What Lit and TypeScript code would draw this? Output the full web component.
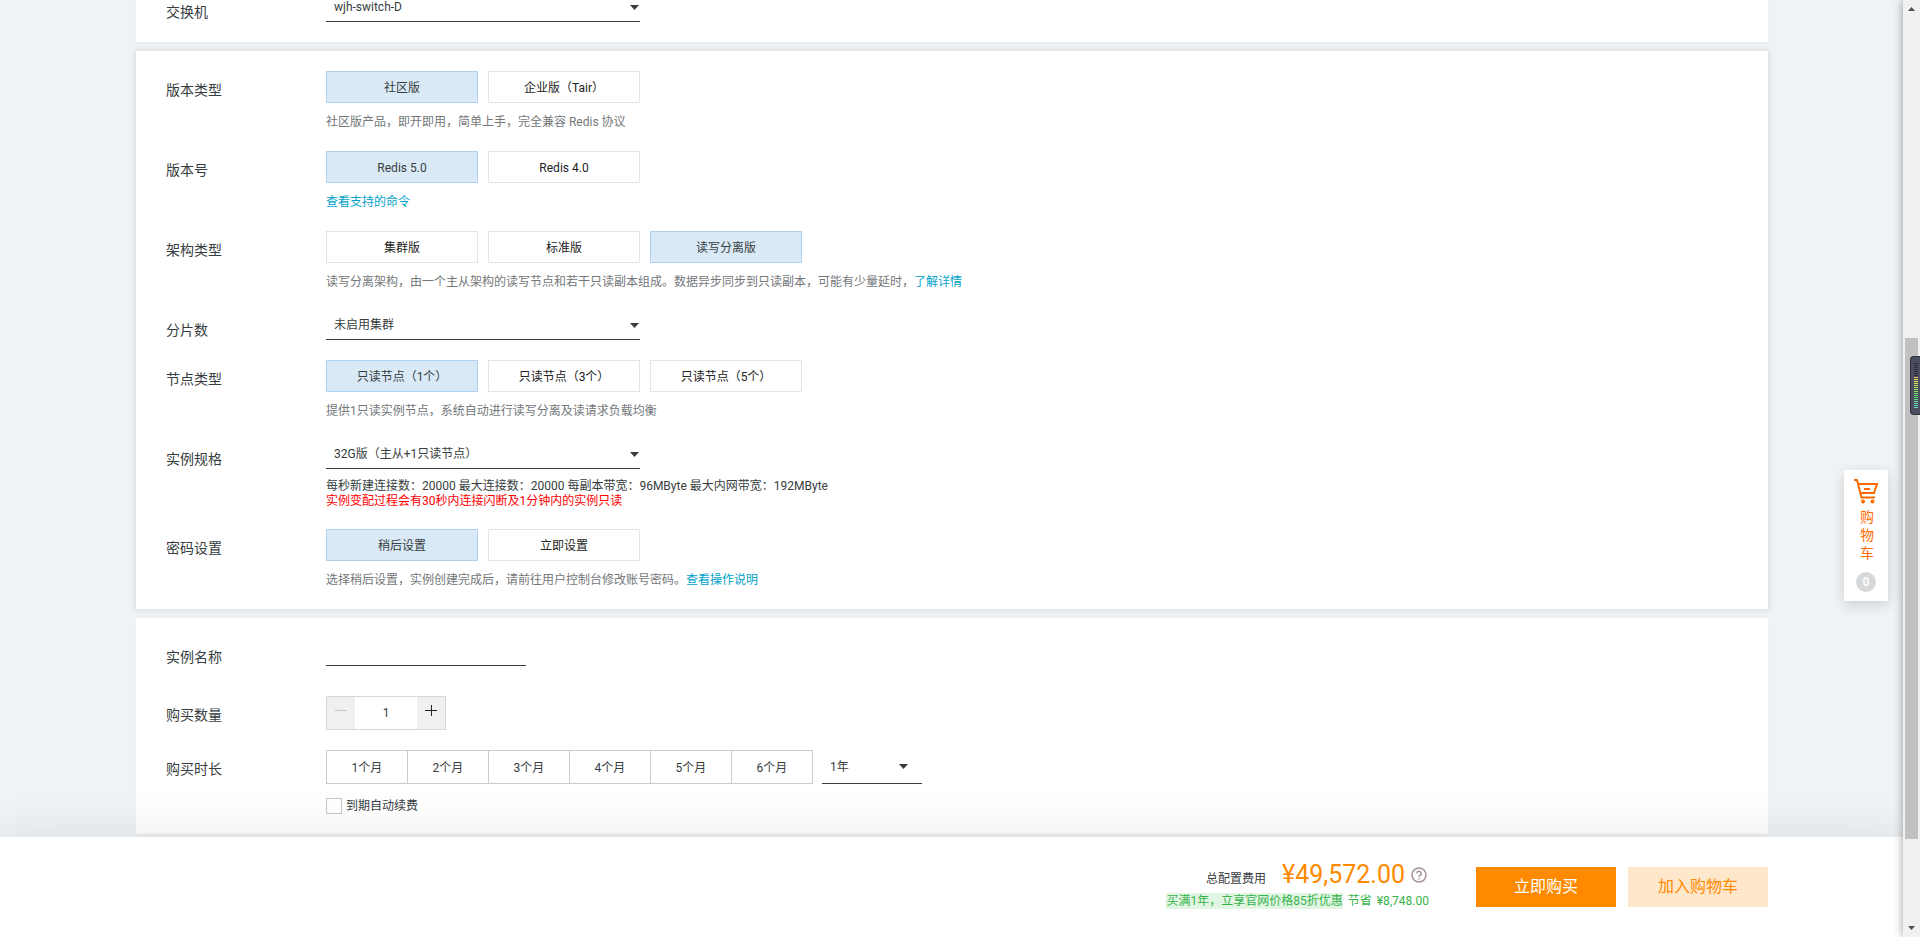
import { LitElement, html, css, svg, nothing } from "lit";
import { customElement, property, state } from "lit/decorators.js";
import { classMap } from "lit/directives/class-map.js";

const base = css`
  :host, * { box-sizing: border-box; }
  button, input, select { font: inherit; color: inherit; margin: 0; border-radius: 0; }
  button { padding: 0; cursor: pointer; }
`;

@customElement("drop-down")
class DropDown extends LitElement {
  static styles = [base, css`
    :host { display: grid; width: 314px; height: 29px; border-bottom: 1px solid #373d41; }
    :host([compact]) { width: 100px; height: 34px; }
    select {
      grid-area: 1 / 1; width: 100%; appearance: none; border: 0; outline: 0;
      background: transparent; padding: 0 24px 0 8px; color: #373d41;
    }
    svg { grid-area: 1 / 1; place-self: center end; margin-right: 1px; width: 9px; height: 5px; pointer-events: none; }
    :host([compact]) svg { margin-right: 14px; }
  `];
  @property() label = "";
  @property() value = "";
  render() {
    return html`
      <select aria-label=${this.label}><option>${this.value}</option></select>
      <svg viewBox="0 0 9 5"><path d="M0 0h9L4.500 5z" fill="#373d41" /></svg>`;
  }
}

@customElement("option-group")
class OptionGroup extends LitElement {
  static styles = [base, css`
    :host { display: flex; gap: 10px; }
    button { width: 152px; height: 32px; padding-top: 2px; border: 1px solid #e3e4e6; background: #fff; color: #222; }
    .on { background: #d9eaf6; border-color: #b0d2ee; color: #373d41; }
  `];
  @property({ attribute: false }) options: string[] = [];
  @property({ type: Number }) selected = 0;
  render() {
    return this.options.map((text, i) => html`
      <button type="button" aria-pressed=${i === this.selected} class=${classMap({ on: i === this.selected })}
        @click=${() => (this.selected = i)}>${text}</button>`);
  }
}

@customElement("form-row")
class FormRow extends LitElement {
  static styles = css`
    :host { display: grid; grid-template-columns: 160px 1fr; }
    .label { padding-top: 10px; font-size: 14px; line-height: 18px; }
  `;
  @property() label = "";
  render() {
    return html`<div class="label">${this.label}</div><div><slot></slot></div>`;
  }
}

@customElement("cart-tab")
class CartTab extends LitElement {
  static styles = [base, css`
    :host { display: block; }
    a {
      display: flex; flex-direction: column; align-items: center; width: 44px; height: 131px;
      padding-top: 8px; background: #fff; color: #ff6a00; text-decoration: none;
      box-shadow: 0 4px 12px rgba(0, 0, 0, .15);
    }
    svg { width: 26px; height: 26px; }
    .name { width: 14px; margin: 4px 0 0 2px; font-size: 14px; line-height: 18px; word-break: break-all; }
    .count {
      margin-top: 10px; width: 20px; height: 20px; border-radius: 50%; background: #d7d8d9;
      color: #fff; font-size: 12px; font-weight: 700; line-height: 20px; text-align: center;
    }
  `];
  render() {
    return html`<a href="#cart">
      <svg viewBox="0 0 26 26" fill="none" stroke="#ff6a00" stroke-width="2">
        <path d="M1 2h3l4.500 17.500H22M5 6h19l-3 9H8M11 11h6" />
        <circle cx="10" cy="23.500" r="2" fill="#ff6a00" stroke="none" />
        <circle cx="19.500" cy="23.500" r="2" fill="#ff6a00" stroke="none" />
      </svg>
      <span class="name">购物车</span>
      <span class="count">0</span>
    </a>`;
  }
}

@customElement("scroll-rail")
class ScrollRail extends LitElement {
  static styles = css`
    :host { display: flex; flex-direction: column; align-items: center; background: #f1f1f1; }
    svg { width: 17px; height: 17px; flex: none; }
    .before { flex: 321 0 0; }
    .thumb { flex: 501 0 0; width: 13px; background: #c1c1c1; }
    .after { flex: 81 0 0; }
  `;
  render() {
    return html`
      <svg viewBox="0 0 17 17"><path d="M5 11h7L8.500 7z" fill="#505050" /></svg>
      <div class="before"></div><div class="thumb"></div><div class="after"></div>
      <svg viewBox="0 0 17 17"><path d="M5 6h7L8.500 10z" fill="#505050" /></svg>`;
  }
}

@customElement("level-meter")
class LevelMeter extends LitElement {
  static styles = css`
    :host {
      display: block; width: 10px; height: 59px; box-sizing: border-box; overflow: hidden;
      background: #4a4e5e; border: 1px solid #2c2f3c; border-right: 0; border-radius: 4px 0 0 4px;
    }
    svg { display: block; width: 9px; height: 57px; }
  `;
  private color(i: number) {
    if (i < 7) return "#2b2e3a";
    const t = (i - 7) / 15;
    return `hsl(${Math.round(42 + t * 128)} ${Math.round(80 - t * 20)}% 63%)`;
  }
  render() {
    return html`<svg viewBox="0 0 9 57">
      ${Array.from({ length: 23 }, (_, i) => svg`<rect x="3" y=${6 + i * 2} width="4" height="1" fill=${this.color(i)} />`)}
    </svg>`;
  }
}

@customElement("app-root")
class AppRoot extends LitElement {
  static styles = [base, css`
    :host {
      display: grid; grid-template-columns: minmax(0, 1fr) 17px; height: 100vh; overflow: hidden; position: relative;
      font: 12px/18px Roboto, "Noto Sans CJK SC", sans-serif; color: #373d41; background: #f0f3f5;
    }
    .page { position: relative; display: flex; flex-direction: column; overflow: hidden; }
    .scroll { flex: 1; min-height: 0; overflow: hidden; padding: 0 135px 0 136px; }
    .cards { display: flex; flex-direction: column; gap: 9px; margin-top: -27px; }
    .card {
      display: flex; flex-direction: column; gap: 20px; padding: 20px 30px;
      background: #fff; box-shadow: 0 1px 2px rgba(0, 0, 0, .05);
    }
    .active { box-shadow: 0 0 6px 1px rgba(0, 0, 0, .1); }
    p { margin: 10px 0 0; }
    .hint { color: #73777a; }
    .tight { line-height: 15px; }
    .warn { color: #f00; }
    a { color: #00a2ca; text-decoration: none; }
    .name { display: block; width: 200px; height: 28px; margin-bottom: 10px; border: 0; border-bottom: 1px solid #373d41; background: transparent; outline: 0; }
    .stepper { display: flex; width: 120px; height: 34px; border: 1px solid #d7d8d9; }
    .stepper button { display: grid; place-items: center; width: 28px; border: 0; background: #f0f0f0; padding-bottom: 6px; color: #222; }
    .stepper button:disabled { color: #c6c8ca; }
    .stepper svg { width: 12px; height: 12px; }
    .stepper input { flex: 1; min-width: 0; border: 0; outline: 0; text-align: center; background: #fff; }
    .duration { display: flex; gap: 9px; }
    .months { display: flex; border: 1px solid #ccc; }
    .months button { width: 81px; height: 32px; padding-top: 2px; border: 0; border-right: 1px solid #ccc; background: transparent; }
    .months button:last-child { width: 80px; border-right: 0; }
    .months .on { background: #d9eaf6; }
    .renew { display: flex; align-items: center; gap: 4px; height: 16px; margin-top: 14px; }
    .renew input { appearance: none; width: 16px; height: 16px; border: 1px solid #c3c5d0; background: #fff; }
    .renew input:checked { background: #00a2ca; }
    .bar {
      position: relative; display: flex; justify-content: flex-end; align-items: flex-start; gap: 12px;
      height: 100px; padding: 22px 135px 0 0; background: #fff; box-shadow: 0 0 50px rgba(0, 0, 0, .1);
    }
    .cost { display: flex; flex-direction: column; align-items: flex-end; margin-right: 35px; }
    .total { display: flex; align-items: center; height: 32px; padding-right: 2px; }
    .total span { padding: 8px 16px 0 0; }
    .total strong { color: #ff8a00; font-size: 25px; font-weight: 400; line-height: 32px; padding-right: 6px; }
    .total svg { width: 16px; height: 16px; }
    .saving { display: flex; gap: 5px; color: #35b34a; line-height: 16px; margin-top: 2px; }
    mark { background: #e1f5e3; color: inherit; }
    .buy { width: 140px; height: 40px; margin-top: 8px; border: 0; background: #ff8a00; color: #fff; font-size: 16px; }
    .add { background: #ffe7cc; color: #ff8a00; }
    .edge { position: absolute; inset: 0 -10px 0 auto; width: 10px; box-shadow: 0 0 10px rgba(0, 0, 0, .4); }
    cart-tab { position: absolute; top: 470px; right: 15px; }
    level-meter { position: absolute; top: 356px; right: 0; }
  `];

  @state() private month = -1;
  @state() private count = 1;

  render() {
    const months = [1, 2, 3, 4, 5, 6];
    return html`
      <div class="page">
        <main class="scroll">
          <div class="cards">
            <section class="card">
              <form-row label="交换机"><drop-down label="交换机" value="wjh-switch-D"></drop-down></form-row>
            </section>
            <section class="card active">
              <form-row label="版本类型">
                <option-group .options=${["社区版", "企业版（Tair）"]}></option-group>
                <p class="hint">社区版产品，即开即用，简单上手，完全兼容 Redis 协议</p>
              </form-row>
              <form-row label="版本号">
                <option-group .options=${["Redis 5.0", "Redis 4.0"]}></option-group>
                <p><a href="#commands">查看支持的命令</a></p>
              </form-row>
              <form-row label="架构类型">
                <option-group .options=${["集群版", "标准版", "读写分离版"]} selected="2"></option-group>
                <p class="hint">读写分离架构，由一个主从架构的读写节点和若干只读副本组成。数据异步同步到只读副本，可能有少量延时，<a href="#details">了解详情</a></p>
              </form-row>
              <form-row label="分片数"><drop-down label="分片数" value="未启用集群"></drop-down></form-row>
              <form-row label="节点类型">
                <option-group .options=${["只读节点（1个）", "只读节点（3个）", "只读节点（5个）"]}></option-group>
                <p class="hint">提供1只读实例节点，系统自动进行读写分离及读请求负载均衡</p>
              </form-row>
              <form-row label="实例规格">
                <drop-down label="实例规格" value="32G版（主从+1只读节点）"></drop-down>
                <p class="tight">每秒新建连接数：20000 最大连接数：20000 每副本带宽：96MByte 最大内网带宽：192MByte<br />
                  <span class="warn">实例变配过程会有30秒内连接闪断及1分钟内的实例只读</span></p>
              </form-row>
              <form-row label="密码设置">
                <option-group .options=${["稍后设置", "立即设置"]}></option-group>
                <p class="hint">选择稍后设置，实例创建完成后，请前往用户控制台修改账号密码。<a href="#guide">查看操作说明</a></p>
              </form-row>
            </section>
            <section class="card">
              <form-row label="实例名称"><input class="name" aria-label="实例名称" /></form-row>
              <form-row label="购买数量">
                <div class="stepper">
                  <button type="button" aria-label="-" ?disabled=${this.count === 1} @click=${() => this.count--}>
                    <svg viewBox="0 0 12 12"><path d="M0 6.500h12" stroke="currentColor" /></svg>
                  </button>
                  <input aria-label="购买数量" .value=${String(this.count)} />
                  <button type="button" aria-label="+" @click=${() => this.count++}>
                    <svg viewBox="0 0 12 12"><path d="M0 6.500h12M6.500 1v11" stroke="currentColor" /></svg>
                  </button>
                </div>
              </form-row>
              <form-row label="购买时长">
                <div class="duration">
                  <div class="months">
                    ${months.map((n, i) => html`<button type="button" class=${this.month === i ? "on" : nothing}
                      @click=${() => (this.month = i)}>${n}个月</button>`)}
                  </div>
                  <drop-down compact label="购买时长" value="1年"></drop-down>
                </div>
                <label class="renew"><input type="checkbox" />到期自动续费</label>
              </form-row>
            </section>
          </div>
        </main>
        <footer class="bar">
          <div class="cost">
            <div class="total">
              <span>总配置费用</span><strong>¥49,572.00</strong>
              <svg viewBox="0 0 16 16" fill="none" stroke="#a59393" stroke-width="1.500">
                <circle cx="8" cy="8" r="7" />
                <path d="M5.800 6.500a2.200 2.200 0 1 1 3.300 1.900c-.8.5-1.100.8-1.100 1.600M8 11v1.500" />
              </svg>
            </div>
            <div class="saving"><mark>买满1年，立享官网价格85折优惠</mark><span>节省</span><span>¥8,748.00</span></div>
          </div>
          <button type="button" class="buy">立即购买</button>
          <button type="button" class="buy add">加入购物车</button>
        </footer>
        <cart-tab></cart-tab>
        <div class="edge"></div>
      </div>
      <scroll-rail></scroll-rail>
      <level-meter></level-meter>`;
  }
}
